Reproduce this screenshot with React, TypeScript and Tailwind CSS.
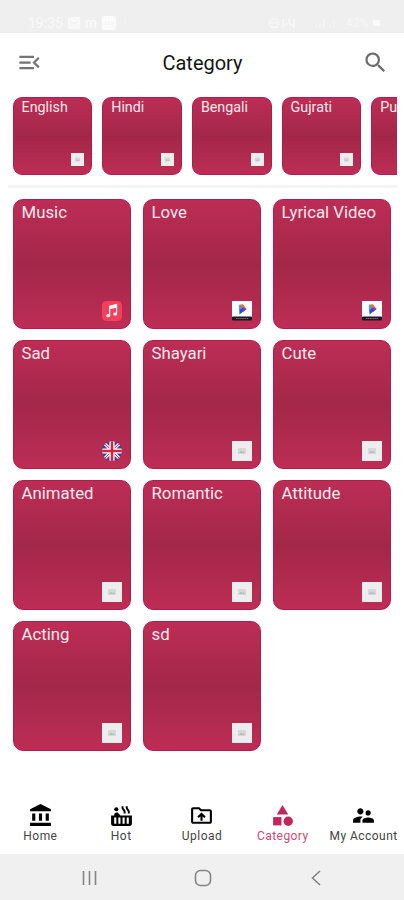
import type { ComponentType } from "react";
import clsx from "clsx";
import {
  MdAccountBalance,
  MdCategory,
  MdHotTub,
  MdMenuOpen,
  MdOutlineDriveFolderUpload,
  MdSearch,
  MdSupervisorAccount,
} from "react-icons/md";

type Thumb = "empty" | "music" | "play" | "flag";

type CategoryItem = {
  name: string;
  thumb: Thumb;
};

type NavItem = {
  label: string;
  icon: ComponentType<{ className?: string }>;
  active?: boolean;
};

const languages = ["English", "Hindi", "Bengali", "Gujrati", "Pu"];

const categories: CategoryItem[] = [
  { name: "Music", thumb: "music" },
  { name: "Love", thumb: "play" },
  { name: "Lyrical Video", thumb: "play" },
  { name: "Sad", thumb: "flag" },
  { name: "Shayari", thumb: "empty" },
  { name: "Cute", thumb: "empty" },
  { name: "Animated", thumb: "empty" },
  { name: "Romantic", thumb: "empty" },
  { name: "Attitude", thumb: "empty" },
  { name: "Acting", thumb: "empty" },
  { name: "sd", thumb: "empty" },
];

const navItems: NavItem[] = [
  { label: "Home", icon: MdAccountBalance },
  { label: "Hot", icon: MdHotTub },
  { label: "Upload", icon: MdOutlineDriveFolderUpload },
  { label: "Category", icon: MdCategory, active: true },
  { label: "My Account", icon: MdSupervisorAccount },
];

function ThumbIcon({ thumb, className }: { thumb: Thumb; className?: string }) {
  if (thumb === "music") {
    return (
      <svg viewBox="0 0 20 20" className={className}>
        <rect width="20" height="20" rx="4.5" fill="#f6405a" />
        <path d="M7.6 14.6V5.2L14.6 3.6V6L7.6 7.6M14.6 5V12.8" fill="#fff" stroke="#fff" strokeWidth="1.2" />
        <ellipse cx="6.2" cy="14.7" rx="2" ry="1.6" fill="#fff" />
        <ellipse cx="13.2" cy="13" rx="2" ry="1.6" fill="#fff" />
      </svg>
    );
  }
  if (thumb === "play") {
    return (
      <svg viewBox="0 0 20 20" className={className}>
        <rect width="20" height="16" fill="#fbfbfd" />
        <rect y="15.5" width="20" height="4" rx="1" fill="#201820" />
        <path d="M4 17.5H16" stroke="#75707a" strokeWidth="1" strokeDasharray="1.5 0.6" />
        <path d="M7 4.2 14.5 8 7.5 13.5Z" fill="#3448d8" />
        <path d="M6.8 3.8 11 3.2 14.6 8 11 7Z" fill="#ef6a3c" />
        <path d="M6.8 4.2 10.5 6.5 7 9.5Z" fill="#38a9df" />
        <path d="M11 6.5 14.6 8 11 11Z" fill="#7a3fb4" />
      </svg>
    );
  }
  if (thumb === "flag") {
    return (
      <svg viewBox="0 0 20 20" className={className}>
        <clipPath id="flag-round">
          <circle cx="10" cy="10" r="10" />
        </clipPath>
        <g clipPath="url(#flag-round)">
          <rect width="20" height="20" fill="#2d479b" />
          <path d="M0 0 20 20M20 0 0 20" stroke="#f4f1f6" strokeWidth="3.2" />
          <path d="M0 0 20 20M20 0 0 20" stroke="#d8314f" strokeWidth="1" />
          <path d="M10 0V20M0 10H20" stroke="#fff" strokeWidth="5.2" />
          <path d="M10 0V20M0 10H20" stroke="#d8203f" strokeWidth="2.6" />
        </g>
      </svg>
    );
  }
  return (
    <svg viewBox="0 0 20 20" className={className}>
      <rect width="20" height="20" fill="#ededee" />
      <rect x="6" y="7" width="8" height="6" rx="0.5" fill="#d5d8d8" />
      <path d="M7 12 9 9.5 10.5 11 11.5 10 13 12Z" fill="#b9bcbd" />
    </svg>
  );
}

function StatusBar() {
  return (
    <div className="flex h-[33px] items-end justify-between bg-[#efefef] pr-[24px] pb-[3px] pl-[28px] text-[14px] text-[#f9f9f9]">
      <div className="flex items-center gap-[5px] leading-[14px]">
        <span className="w-[35px]">19:35</span>
        <svg viewBox="0 0 12 12" className="size-[12px]">
          <path d="M0 0H12V12H0Z" fill="#f8f8f8" />
          <path d="M2 4 6 7 10 4" fill="none" stroke="#efefef" />
        </svg>
        <span className="font-bold">m</span>
        <svg viewBox="0 0 14 14" className="size-[14px]">
          <rect width="14" height="14" rx="2" fill="#fbfbfb" />
          <path d="M4 5v4M7 5v4M10 5v4" stroke="#efefef" />
        </svg>
        <span className="pl-[2px]">·</span>
      </div>
      <div className="flex items-center gap-[5px] text-[12px] leading-[14px] text-[#f6f6f6]">
        <svg viewBox="0 0 28 12" className="h-[12px] w-[28px]" fill="none" stroke="#f7f7f7" strokeWidth="1.5">
          <circle cx="6" cy="6" r="4.5" />
          <path d="M3 6H9M15 2V10L19 6M21 2V6L26 10V2" />
        </svg>
        <svg viewBox="0 0 40 12" className="h-[12px] w-[40px]" fill="none" stroke="#f5f5f5" strokeWidth="1.5">
          <path d="M15 11V8M19 11V5M23 11V2M29 11V8M33 11V4" />
        </svg>
        <span>42%</span>
        <span className="h-[6px] w-[7px] bg-[#fafafa]" />
      </div>
    </div>
  );
}

function Header() {
  return (
    <header className="flex h-[64px] items-center justify-between px-[16px] pb-[6px]">
      <MdMenuOpen className="size-[27px] text-[#757575]" />
      <h1 className="pt-[2px] text-[20px] leading-6 text-[#151515]">Category</h1>
      <MdSearch className="-mr-px size-[27px] text-[#6c6c6c]" />
    </header>
  );
}

function LanguageCard({ name }: { name: string }) {
  return (
    <div className="flex h-[78px] w-[79.7px] shrink-0 flex-col justify-between rounded-[9px] border border-[#b51a4d] bg-linear-to-b from-[#bd2d55] via-[#a32748] to-[#bd2d55] pt-px pr-[7px] pb-[8px] pl-[8px]">
      <span className="text-[14.3px] leading-[17px] whitespace-nowrap text-[#fbe9ee]">{name}</span>
      <ThumbIcon thumb="empty" className="size-[13px] self-end" />
    </div>
  );
}

function CategoryCard({ item }: { item: CategoryItem }) {
  return (
    <div className="flex h-[129.5px] flex-col justify-between rounded-[10px] border border-[#b51a4d] bg-linear-to-b from-[#bd2d55] via-[#a32748] to-[#bd2d55] pt-[2px] pr-[8px] pb-[7px] pl-[8px]">
      <span className="text-[16.8px] leading-[20px] whitespace-nowrap text-[#fbe9ee]">{item.name}</span>
      <ThumbIcon thumb={item.thumb} className="size-[20px] self-end" />
    </div>
  );
}

function BottomNav() {
  return (
    <nav className="grid h-[63px] grid-cols-5 pt-[12px]">
      {navItems.map(({ label, icon: Icon, active }) => (
        <div
          key={label}
          className={clsx("flex flex-col items-center", active ? "text-[#c2255c]" : "text-black")}
        >
          <Icon className="mb-px size-[25px]" />
          <span
            className={clsx(
              "text-[12px] leading-[14px] tracking-[0.45px] whitespace-nowrap",
              active ? "text-[#c94a76]" : "text-[#444]"
            )}
          >
            {label}
          </span>
        </div>
      ))}
    </nav>
  );
}

function SystemBar() {
  return (
    <div className="flex h-[46px] items-center justify-between bg-[#f0f0f0] pt-[2px] pr-[79px] pl-[80px] text-[#858585]">
      <svg viewBox="0 0 20 20" className="size-[20px]" fill="none" stroke="currentColor" strokeWidth="1.6">
        <path d="M3.5 3V17M9.5 3V17M15.5 3V17" />
      </svg>
      <svg viewBox="0 0 20 20" className="size-[20px]" fill="none" stroke="currentColor" strokeWidth="1.6">
        <rect x="2.5" y="2.5" width="15" height="15" rx="5" />
      </svg>
      <svg viewBox="0 0 20 20" className="size-[20px]" fill="none" stroke="currentColor" strokeWidth="1.6">
        <path d="M15 3 7.5 10 15 17" />
      </svg>
    </div>
  );
}

export default function App() {
  return (
    <div className="flex h-[900px] w-[404px] flex-col overflow-hidden bg-white font-['Roboto',sans-serif]">
      <StatusBar />
      <Header />
      <div className="mr-[7px] ml-[8px] flex gap-[10px] overflow-hidden pl-[4.5px]">
        {languages.map((name) => (
          <LanguageCard key={name} name={name} />
        ))}
      </div>
      <div className="mt-[10px] mr-[7px] mb-[11px] ml-[8px] h-[3px] shrink-0 bg-[#f5f5f5]" />
      <main className="grid flex-1 grid-cols-3 content-start gap-x-[12px] gap-y-[11.2px] pr-[13.5px] pl-[12.5px]">
        {categories.map((item) => (
          <CategoryCard key={item.name} item={item} />
        ))}
      </main>
      <BottomNav />
      <SystemBar />
    </div>
  );
}
